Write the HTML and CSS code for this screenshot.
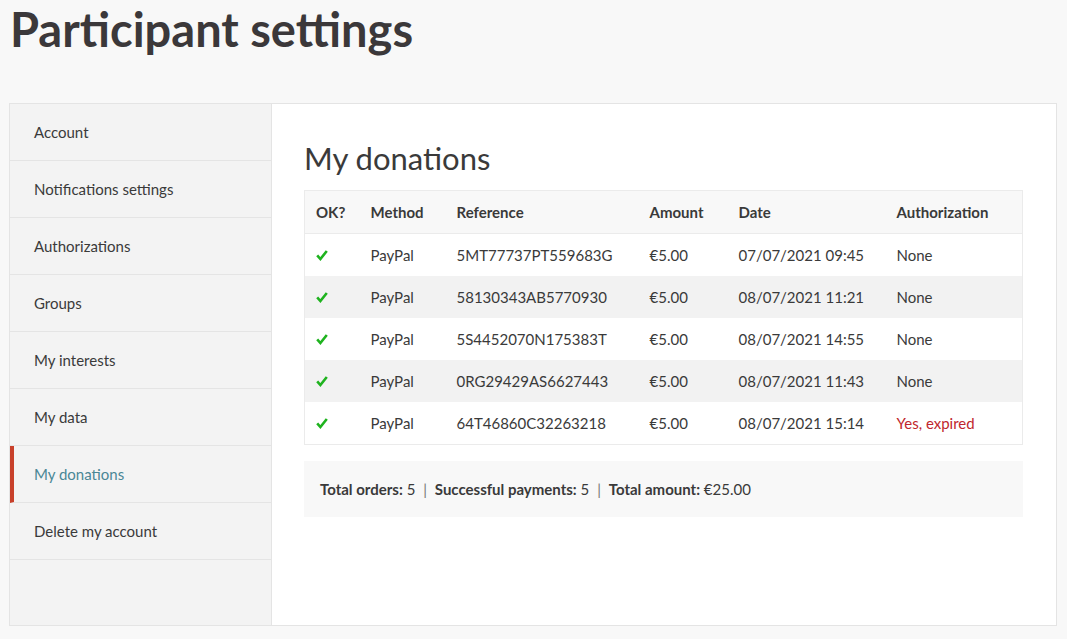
FILE: index.html
```html
<!DOCTYPE html>
<html lang="en">
<head>
<meta charset="utf-8">
<title>Participant settings</title>
<link rel="stylesheet" href="styles.css">
</head>
<body>
<h1 class="page-title">Participant settings</h1>
<div class="panel">
  <nav class="sidebar">
    <a class="nav-item" href="#">Account</a>
    <a class="nav-item" href="#">Notifications settings</a>
    <a class="nav-item" href="#">Authorizations</a>
    <a class="nav-item" href="#">Groups</a>
    <a class="nav-item" href="#">My interests</a>
    <a class="nav-item" href="#">My data</a>
    <a class="nav-item active" href="#">My donations</a>
    <a class="nav-item" href="#">Delete my account</a>
  </nav>
  <main class="content">
    <h2 class="section-title">My donations</h2>
    <table class="donations">
      <colgroup>
        <col class="c-ok"><col class="c-method"><col class="c-ref"><col class="c-amount"><col class="c-date"><col class="c-auth">
      </colgroup>
      <thead>
        <tr><th>OK?</th><th>Method</th><th>Reference</th><th>Amount</th><th>Date</th><th>Authorization</th></tr>
      </thead>
      <tbody>
        <tr><td><svg class="check" viewBox="0 0 12 12"><path d="M1.2 6.4 L4.4 10 L10.8 2"/></svg></td><td>PayPal</td><td>5MT77737PT559683G</td><td>€5.00</td><td>07/07/2021 09:45</td><td>None</td></tr>
        <tr><td><svg class="check" viewBox="0 0 12 12"><path d="M1.2 6.4 L4.4 10 L10.8 2"/></svg></td><td>PayPal</td><td>58130343AB5770930</td><td>€5.00</td><td>08/07/2021 11:21</td><td>None</td></tr>
        <tr><td><svg class="check" viewBox="0 0 12 12"><path d="M1.2 6.4 L4.4 10 L10.8 2"/></svg></td><td>PayPal</td><td>5S4452070N175383T</td><td>€5.00</td><td>08/07/2021 14:55</td><td>None</td></tr>
        <tr><td><svg class="check" viewBox="0 0 12 12"><path d="M1.2 6.4 L4.4 10 L10.8 2"/></svg></td><td>PayPal</td><td>0RG29429AS6627443</td><td>€5.00</td><td>08/07/2021 11:43</td><td>None</td></tr>
        <tr><td><svg class="check" viewBox="0 0 12 12"><path d="M1.2 6.4 L4.4 10 L10.8 2"/></svg></td><td>PayPal</td><td>64T46860C32263218</td><td>€5.00</td><td>08/07/2021 15:14</td><td class="expired">Yes, expired</td></tr>
      </tbody>
    </table>
    <div class="summary">
      <strong>Total orders:</strong> 5 <span class="sep">|</span> <strong>Successful payments:</strong> 5 <span class="sep">|</span> <strong>Total amount:</strong> €25.00
    </div>
  </main>
</div>
</body>
</html>
```
FILE: styles.css
```css
html, body {
  margin: 0;
  padding: 0;
}
body {
  background: #f8f8f8;
  font-family: "Lato", "Noto Sans", sans-serif;
  font-size: 15px;
  color: #3a3a3a;
  padding: 0 10px 14px 9px;
}
.page-title {
  margin: 0;
  padding: 2px 0 0 1px;
  height: 103px;
  box-sizing: border-box;
  font-size: 47px;
  font-weight: 700;
  line-height: 54px;
  color: #3b383a;
}
.panel {
  display: flex;
  border: 1px solid #e4e4e4;
  height: 523px;
  box-sizing: border-box;
  background: #fff;
}
.sidebar {
  width: 261px;
  flex: none;
  background: #f3f3f3;
  border-right: 1px solid #e4e4e4;
  display: flex;
  flex-direction: column;
}
.nav-item {
  display: block;
  height: 56px;
  line-height: 56px;
  padding-left: 24px;
  border-bottom: 1px solid #e4e4e4;
  color: #3a3a3a;
  text-decoration: none;
}
.nav-item.active {
  color: #4a8796;
  border-left: 4px solid #c8402a;
  padding-left: 20px;
}
.content {
  flex: 1;
  padding: 37px 33px 0 32px;
}
.section-title {
  margin: 0 0 15px;
  font-size: 31px;
  font-weight: 400;
  line-height: 34px;
  color: #3a3a3a;
}
.donations {
  width: 100%;
  border-collapse: collapse;
  border: 1px solid #ebebeb;
  table-layout: fixed;
}
.c-ok { width: 55px; }
.c-method { width: 86px; }
.c-ref { width: 193px; }
.c-amount { width: 89px; }
.c-date { width: 158px; }
.donations th, .donations td {
  text-align: left;
  padding: 0 0 1px 11px;
  white-space: nowrap;
}
.donations th {
  height: 41px;
  font-weight: 700;
  background: #f8f8f8;
  border-bottom: 1px solid #ebebeb;
}
.donations td {
  height: 41px;
}
.donations tbody tr:nth-child(even) td {
  background: #f2f2f2;
}
.check {
  width: 12px;
  height: 12px;
  display: block;
  fill: none;
  stroke: #1fb31f;
  stroke-width: 2.6;
  stroke-linecap: butt;
  stroke-linejoin: miter;
}
.expired {
  color: #c0262d;
}
.summary {
  margin-top: 16px;
  background: #f8f8f8;
  height: 56px;
  line-height: 56px;
  padding-left: 16px;
}
.summary strong {
  font-weight: 700;
}
.sep {
  margin: 0 4px;
  color: #777;
}
```
